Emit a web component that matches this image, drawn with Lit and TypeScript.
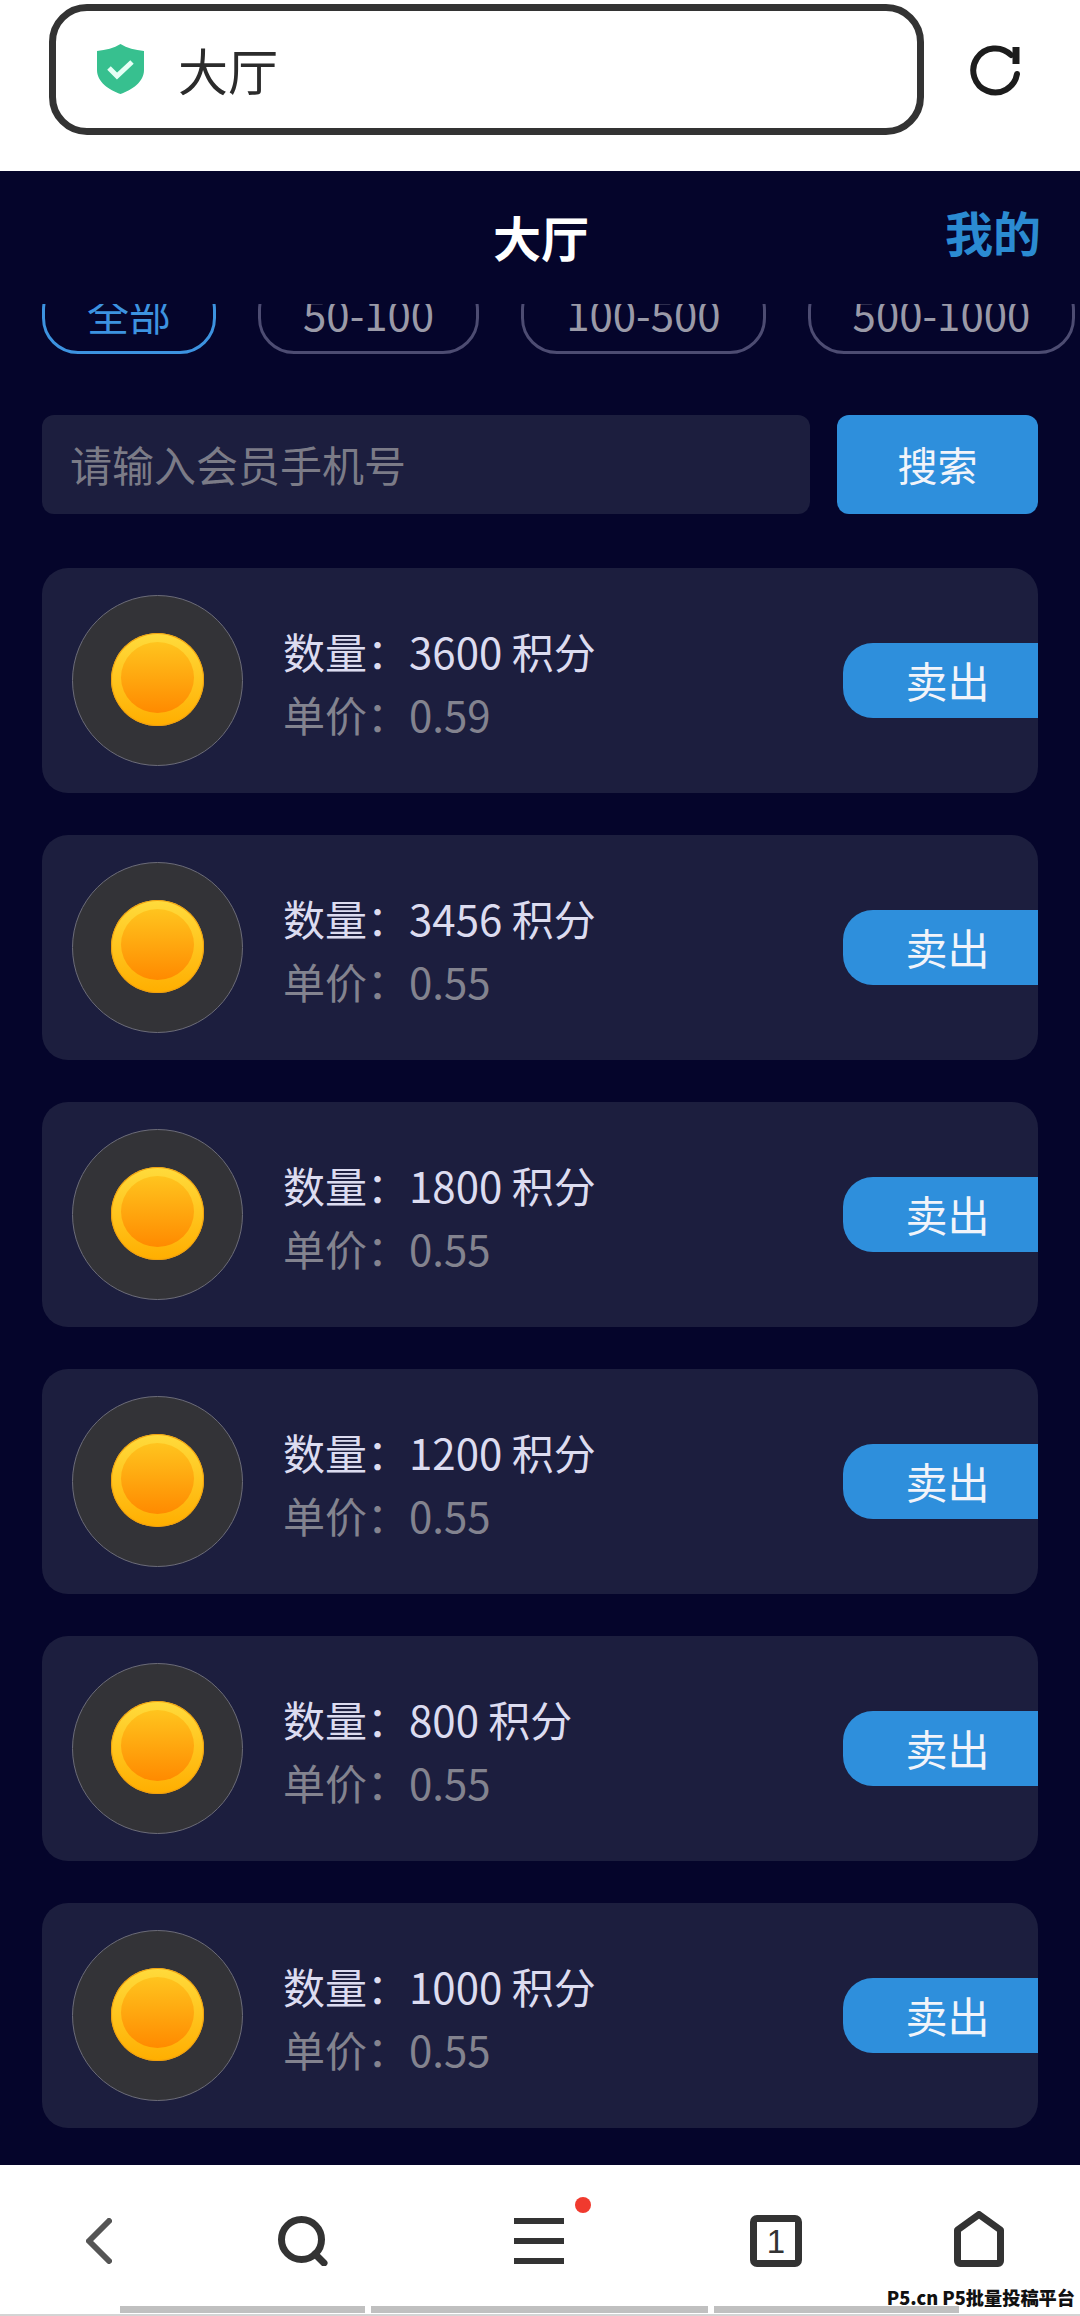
import { LitElement, html, css } from 'lit';
import { customElement } from 'lit/decorators.js';

const tabs = ['全部', '50-100', '100-500', '500-1000'];

const orders = [
  { qty: 3600, price: '0.59' },
  { qty: 3456, price: '0.55' },
  { qty: 1800, price: '0.55' },
  { qty: 1200, price: '0.55' },
  { qty: 800, price: '0.55' },
  { qty: 1000, price: '0.55' },
];

@customElement('app-root')
export class AppRoot extends LitElement {
  static styles = css`
    :host {
      display: block;
      width: 1080px;
      height: 2316px;
      font-family: "Noto Sans CJK SC", "Noto Sans", sans-serif;
      background: #05052b;
    }
    .page {
      display: flex;
      flex-direction: column;
      height: 2316px;
      overflow: hidden;
    }

    /* browser address bar */
    .topbar {
      height: 171px;
      flex: none;
      box-sizing: border-box;
      padding: 4px 0 0 49px;
      display: flex;
      align-items: flex-start;
      background: #fff;
    }
    .address {
      width: 875px;
      height: 131px;
      box-sizing: border-box;
      border: 7px solid #333;
      border-radius: 38px;
      display: flex;
      align-items: center;
      padding: 0 0 2px 41px;
      font-size: 50px;
      color: #2b2b2b;
    }
    .shield {
      width: 47px;
      height: 50px;
      margin-right: 34px;
    }
    .reload {
      width: 56px;
      height: 56px;
      margin: 38px 0 0 45px;
    }

    .main {
      flex: 1;
      min-height: 0;
      overflow: hidden;
    }
    .header {
      height: 133px;
      box-sizing: border-box;
      display: grid;
      grid-template-columns: 1fr auto 1fr;
      padding: 30px 39px 0 41px;
    }
    .title {
      grid-column: 2;
      margin-top: 5px;
      font-size: 48px;
      line-height: 60px;
      font-weight: 700;
      color: #fff;
    }
    .mine {
      justify-self: end;
      font-size: 48px;
      line-height: 60px;
      font-weight: 700;
      color: #2b8bd2;
    }

    .tabstrip {
      height: 52px;
      overflow: hidden;
      padding-left: 42px;
    }
    .tabs {
      display: flex;
      gap: 42px;
      margin-top: -30px;
      width: 1100px;
    }
    .tab {
      height: 80px;
      box-sizing: border-box;
      padding: 0 42px;
      border: 3px solid #4d4c72;
      border-radius: 36px;
      font-size: 42px;
      line-height: 72px;
      color: #9a9aa8;
      white-space: nowrap;
    }
    .tab.on {
      border-color: #3d93e0;
      color: #3d93e0;
    }

    .search {
      display: flex;
      gap: 27px;
      margin: 59px 42px 0 42px;
      height: 99px;
    }
    .search input {
      flex: 1;
      min-width: 0;
      box-sizing: border-box;
      border: 0;
      outline: 0;
      padding: 0 28px 2px;
      border-radius: 12px;
      background: #1c1e3e;
      font: inherit;
      font-size: 42px;
      color: #ddd;
    }
    .search input::placeholder {
      color: #7b7b87;
      opacity: 1;
    }
    .search button {
      width: 201px;
      border: 0;
      padding: 0 0 2px;
      border-radius: 12px;
      background: #2e8fdc;
      font: inherit;
      font-size: 40px;
      color: #f2f4fa;
    }

    .list {
      display: flex;
      flex-direction: column;
      gap: 42px;
      margin: 54px 42px 0 42px;
    }
  `;

  render() {
    return html`
      <div class="page">
        <div class="topbar">
          <div class="address">
            <svg class="shield" viewBox="0 0 47 50">
              <path d="M23.5 0C30 4 38 6 47 7V26C47 38 35 46 23.5 50C12 46 0 38 0 26V7C9 6 17 4 23.5 0Z" fill="#37c08f" />
              <path d="M12 24L20 32L35 18" fill="none" stroke="#e6fff5" stroke-width="5" />
            </svg>
            大厅
          </div>
          <svg class="reload" viewBox="0 0 56 56">
            <path d="M42 13A22 22 0 1 0 48 32" fill="none" stroke="#1c1c1c" stroke-width="6" stroke-linecap="round" />
            <path d="M47 5V22" fill="none" stroke="#1c1c1c" stroke-width="7" />
          </svg>
        </div>

        <div class="main">
          <div class="header">
            <div class="title">大厅</div>
            <div class="mine">我的</div>
          </div>
          <div class="tabstrip">
            <div class="tabs">
              ${tabs.map((t, i) => html`<div class="tab ${i === 0 ? 'on' : ''}">${t}</div>`)}
            </div>
          </div>
          <div class="search">
            <input placeholder="请输入会员手机号" />
            <button>搜索</button>
          </div>
          <div class="list">
            ${orders.map((o) => html`<order-card .qty=${o.qty} .price=${o.price}></order-card>`)}
          </div>
        </div>

        <bottom-bar></bottom-bar>
      </div>
    `;
  }
}

@customElement('order-card')
export class OrderCard extends LitElement {
  static properties = {
    qty: { type: Number },
    price: { type: String },
  };

  declare qty: number;
  declare price: string;

  static styles = css`
    :host {
      display: block;
    }
    .card {
      height: 225px;
      display: flex;
      align-items: center;
      padding-left: 30px;
      border-radius: 26px;
      background: #1c1e3e;
    }
    .badge {
      width: 171px;
      height: 171px;
      flex: none;
      box-sizing: border-box;
      border: 1px solid #6c6c78;
      border-radius: 50%;
      background: #333337;
      display: flex;
      align-items: center;
      justify-content: center;
    }
    .coin {
      width: 93px;
      height: 93px;
      margin-top: -3px;
      border-radius: 50%;
      background: linear-gradient(#ffdb3c, #ffae00);
      box-shadow: inset 0 0 0 1px #f0a010;
      display: flex;
      align-items: center;
      justify-content: center;
    }
    .coin i {
      display: block;
      width: 73px;
      height: 71px;
      margin-top: -3px;
      border-radius: 50%;
      background: linear-gradient(#ffc41e, #ff8a00);
    }
    .info {
      margin: 3px 0 0 40px;
      font-size: 42px;
      line-height: 63px;
    }
    .qty {
      color: #dcdcf0;
    }
    .price {
      color: #83838f;
    }
    .sell {
      margin-left: auto;
      width: 195px;
      height: 75px;
      box-sizing: border-box;
      padding: 0 0 2px 14px;
      border: 0;
      border-radius: 30px 0 0 30px;
      background: #2e8fdc;
      font: inherit;
      font-size: 42px;
      color: #f2f4fa;
    }
  `;

  render() {
    return html`
      <div class="card">
        <div class="badge"><div class="coin"><i></i></div></div>
        <div class="info">
          <div class="qty">数量：${this.qty} 积分</div>
          <div class="price">单价：${this.price}</div>
        </div>
        <button class="sell">卖出</button>
      </div>
    `;
  }
}

@customElement('bottom-bar')
export class BottomBar extends LitElement {
  static styles = css`
    :host {
      display: block;
      flex: none;
    }
    .bar {
      position: relative;
      height: 151px;
      box-sizing: border-box;
      padding-top: 46px;
      background: #fff;
      border-bottom: 2px solid #d4d4d4;
    }
    .icons {
      display: flex;
      align-items: center;
      height: 60px;
      padding-left: 86px;
    }
    .icons svg {
      display: block;
    }
    .back { width: 26px; height: 46px; }
    .find { width: 50px; height: 50px; margin-left: 166px; }
    .menu {
      position: relative;
      width: 50px;
      height: 46px;
      margin-left: 186px;
      display: flex;
      flex-direction: column;
      justify-content: space-between;
    }
    .menu span {
      height: 6px;
      background: #333;
    }
    .menu .dot {
      position: absolute;
      left: 61px;
      top: -21px;
      width: 16px;
      height: 16px;
      border-radius: 50%;
      background: #f03a2e;
    }
    .count {
      width: 52px;
      height: 52px;
      margin-left: 186px;
      box-sizing: border-box;
      border: 7px solid #333;
      border-radius: 7px;
      display: flex;
      align-items: center;
      justify-content: center;
      font-family: "Liberation Sans", sans-serif;
      font-size: 33px;
      line-height: 1;
      color: #333;
    }
    .home { width: 50px; height: 56px; margin: -4px 0 0 152px; }
    .strips {
      display: flex;
      gap: 6px;
      margin-top: 35px;
      padding-left: 120px;
    }
    .strips span {
      height: 7px;
      background: #c0c0c0;
    }
    .s1 { width: 245px; }
    .s2 { width: 337px; }
    .s3 { width: 245px; }
    .mark {
      position: absolute;
      right: 5px;
      bottom: 7px;
      font-size: 18.2px;
      line-height: 20px;
      font-weight: 900;
      color: #111;
      white-space: nowrap;
      text-shadow: 0 0 2px #fff;
    }
  `;

  render() {
    return html`
      <div class="bar">
        <div class="icons">
          <svg class="back" viewBox="0 0 26 46">
            <path d="M23 3L3 23L23 43" fill="none" stroke="#555" stroke-width="6" stroke-linecap="round" stroke-linejoin="round" />
          </svg>
          <svg class="find" viewBox="0 0 50 50">
            <circle cx="23.5" cy="23.5" r="20" fill="none" stroke="#333" stroke-width="7" />
            <path d="M37 38L46 47" fill="none" stroke="#333" stroke-width="7" stroke-linecap="round" />
          </svg>
          <div class="menu"><span></span><span></span><span></span><b class="dot"></b></div>
          <div class="count">1</div>
          <svg class="home" viewBox="0 0 50 56">
            <path d="M3.5 19L25 3.5L46.500 19V50A2.500 2.500 0 0 1 44 52.500H6A2.500 2.500 0 0 1 3.500 50Z" fill="none" stroke="#333" stroke-width="7" stroke-linejoin="round" />
          </svg>
        </div>
        <div class="strips"><span class="s1"></span><span class="s2"></span><span class="s3"></span></div>
        <div class="mark">P5.cn P5批量投稿平台</div>
      </div>
    `;
  }
}
